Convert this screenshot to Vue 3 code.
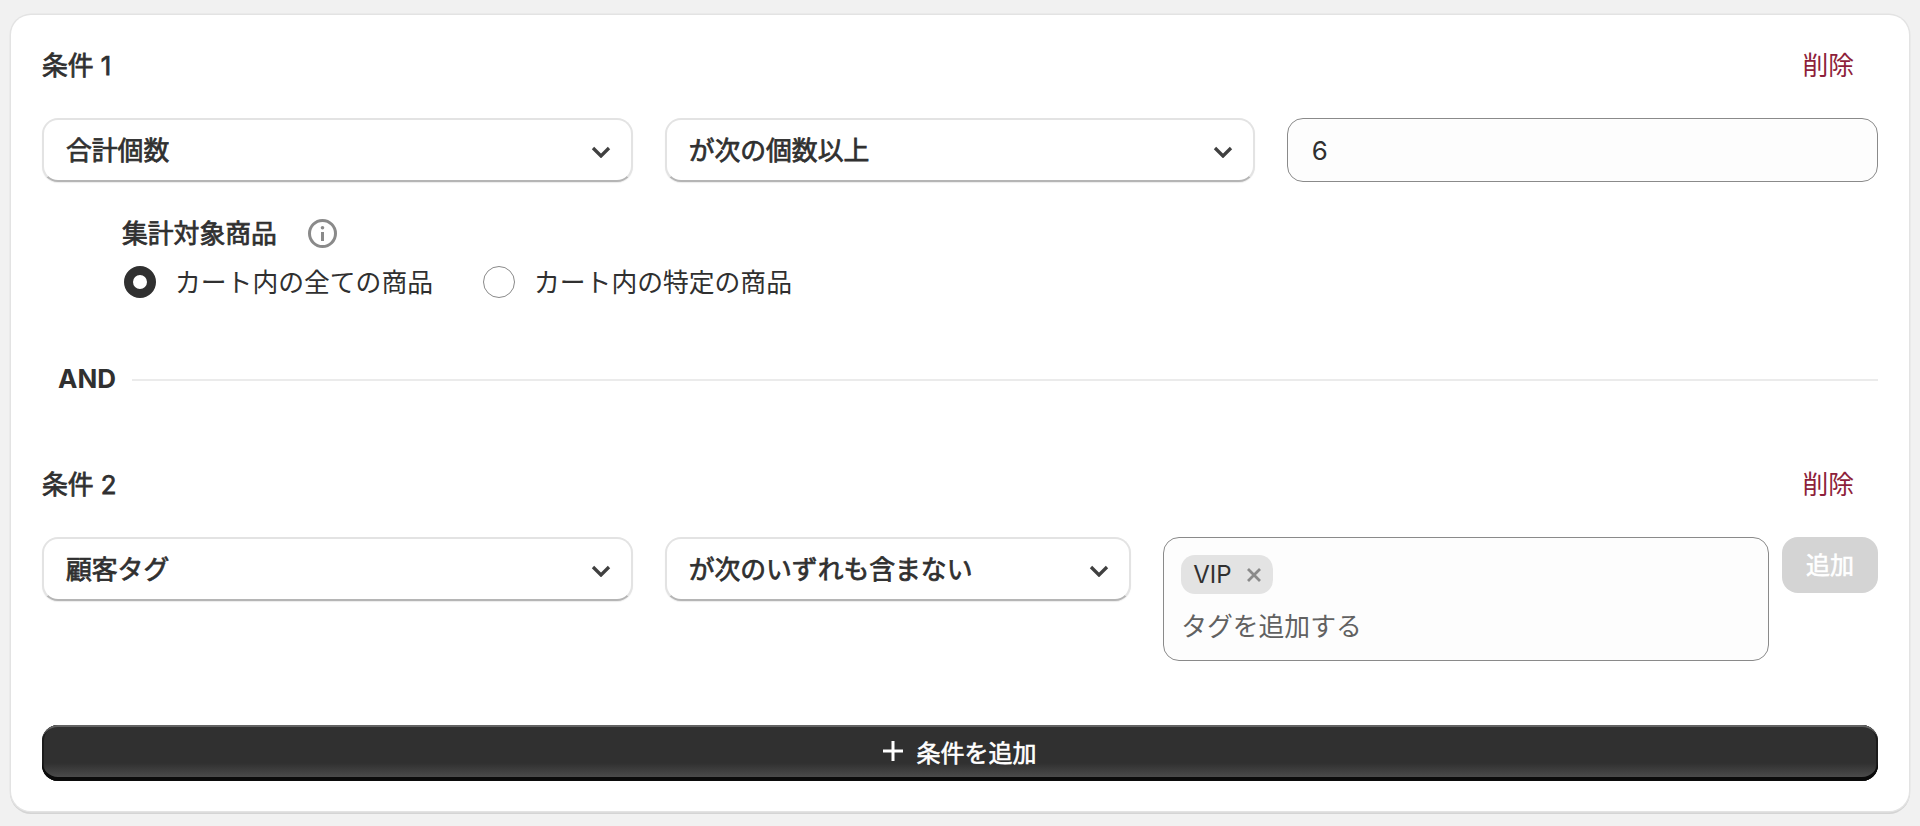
<script setup>
const allItems = 'カート内の全ての商品'
const specificItems = 'カート内の特定の商品'
</script>

<template>
  <div class="page">
    <section class="card">
      <header class="cond-head">
        <h2>条件 1</h2>
        <button class="del">削除</button>
      </header>
      <div class="row row-three">
        <button class="select">
          <span>合計個数</span>
          <svg class="chev" viewBox="0 0 20 12"><path d="M2 2l8 8 8-8" /></svg>
        </button>
        <button class="select">
          <span>が次の個数以上</span>
          <svg class="chev" viewBox="0 0 20 12"><path d="M2 2l8 8 8-8" /></svg>
        </button>
        <div class="field">6</div>
      </div>

      <div class="target">
        <div class="target-label">
          <span>集計対象商品</span>
          <svg class="info" viewBox="0 0 29 29">
            <circle cx="14.5" cy="14.5" r="13" />
            <circle class="dot" cx="14.5" cy="8.8" r="1.8" />
            <path d="M14.5 13v9" />
          </svg>
        </div>
        <div class="radios">
          <label class="radio"><i class="mark on"></i><span>{{ allItems }}</span></label>
          <label class="radio"><i class="mark"></i><span>{{ specificItems }}</span></label>
        </div>
      </div>

      <div class="and">
        <strong>AND</strong>
        <span class="rule"></span>
      </div>

      <header class="cond-head second">
        <h2>条件 2</h2>
        <button class="del">削除</button>
      </header>
      <div class="row row-tags">
        <button class="select">
          <span>顧客タグ</span>
          <svg class="chev" viewBox="0 0 20 12"><path d="M2 2l8 8 8-8" /></svg>
        </button>
        <button class="select">
          <span>が次のいずれも含まない</span>
          <svg class="chev" viewBox="0 0 20 12"><path d="M2 2l8 8 8-8" /></svg>
        </button>
        <div class="tag-wrap">
          <div class="tag-field">
            <span class="chip">VIP
              <svg viewBox="0 0 16 16"><path d="M2 2l12 12M14 2L2 14" /></svg>
            </span>
            <span class="placeholder">タグを追加する</span>
          </div>
          <button class="add-tag">追加</button>
        </div>
      </div>

      <button class="add-cond">
        <svg viewBox="0 0 22 22"><path d="M11 1v20M1 11h20" /></svg>
        <span>条件を追加</span>
      </button>
    </section>
  </div>
</template>

<style>
html, body { margin: 0; background: #f1f1f1; }
</style>

<style scoped>
.page {
  box-sizing: border-box;
  min-height: 826px;
  padding: 15px 11px;
  background: #f1f1f1;
  color: #303030;
  font-family: Inter, "Noto Sans CJK JP", sans-serif;
  font-size: 25.8px;
}
.card {
  background: #fff;
  border-radius: 20px;
  padding: 26px 31px 30px;
  box-shadow: 0 0 0 1.5px #e3e3e3, 0 2px 0 1px #d4d4d4;
}
button { font: inherit; color: inherit; cursor: pointer; }
.cond-head {
  height: 48px;
  display: flex;
  align-items: center;
  justify-content: space-between;
}
.cond-head.second { margin-top: 65px; }
h2 {
  margin: 0;
  padding-bottom: 4px;
  font-size: 25.8px;
  font-weight: 400;
  -webkit-text-stroke: 0.75px currentColor;
}
.del {
  border: 0;
  background: none;
  padding: 0 24px 3px;
  color: #8e1f3b;
}
.row { display: grid; gap: 32px; margin-top: 29px; align-items: start; }
.row-three { grid-template-columns: repeat(3, 1fr); }
.row-tags { grid-template-columns: 590.67px 466.5px 1fr; }
.select {
  box-sizing: border-box;
  height: 64px;
  padding: 0 20px 0 22px;
  display: flex;
  align-items: center;
  justify-content: space-between;
  background: #fff;
  border: 2px solid #e3e3e3;
  border-bottom: 2.5px solid #b5b5b5;
  border-radius: 16px;
  font-weight: 400;
  box-shadow: 0 1px 1px rgba(0, 0, 0, 0.08);
}
.select span { padding-bottom: 3px; -webkit-text-stroke: 0.75px currentColor; }
.chev { width: 20px; height: 12px; margin-top: 4px; fill: none; stroke: #404040; stroke-width: 3.3; }
.field {
  box-sizing: border-box;
  height: 64px;
  padding: 0 23.5px;
  display: flex;
  align-items: center;
  background: #fdfdfd;
  border: 1.5px solid #8a8a8a;
  border-radius: 16px;
}
.target { padding-left: 80px; margin-top: 36px; }
.target-label {
  height: 32px;
  display: flex;
  align-items: center;
  gap: 31px;
}
.target-label span { padding-bottom: 6px; -webkit-text-stroke: 0.75px currentColor; }
.info { width: 29px; height: 29px; margin-top: -1px; fill: none; stroke: #8a8a8a; stroke-width: 3; }
.info .dot { fill: #8a8a8a; stroke: none; }
.radios { display: flex; gap: 50px; margin-top: 16px; padding-left: 2px; }
.radio { display: flex; align-items: center; gap: 19px; height: 32px; cursor: pointer; }
.radio span { padding-bottom: 4px; }
.mark {
  box-sizing: border-box;
  width: 32px;
  height: 32px;
  border-radius: 50%;
  border: 1.5px solid #8a8a8a;
  background: #fff;
}
.mark.on { border: 9px solid #303030; }
.and { display: flex; align-items: center; gap: 16px; height: 32px; margin-top: 65px; padding-left: 16px; }
.and strong { font-weight: 700; font-size: 26px; padding-bottom: 1px; }
.rule { flex: 1; height: 2px; background: #ebebeb; margin-top: 2px; }
.tag-wrap { display: flex; gap: 13px; align-items: flex-start; }
.tag-field {
  box-sizing: border-box;
  flex: 1;
  height: 124px;
  padding: 17px 17px 0;
  background: #fdfdfd;
  border: 1.5px solid #8a8a8a;
  border-radius: 16px;
  display: flex;
  flex-direction: column;
  align-items: flex-start;
}
.chip {
  box-sizing: border-box;
  height: 39px;
  width: 92px;
  padding: 0 11px 0 12px;
  display: flex;
  align-items: center;
  justify-content: space-between;
  background: #e3e3e3;
  border-radius: 14px;
  font-size: 24px;
}
.chip svg { width: 16px; height: 16px; fill: none; stroke: #8a8a8a; stroke-width: 2.8; }
.placeholder { margin-top: 17px; color: #616161; line-height: 32px; }
.add-tag {
  width: 96px;
  height: 56px;
  border: 0;
  border-radius: 16px;
  background: #d4d4d4;
  color: #fff;
  font-size: 24px;
  padding: 0 0 4px;
  -webkit-text-stroke: 0.6px currentColor;
}
.add-cond {
  box-sizing: border-box;
  width: 100%;
  height: 56px;
  margin-top: 64px;
  border: 0;
  border-radius: 16px;
  display: flex;
  align-items: center;
  justify-content: center;
  gap: 13px;
  color: #fff;
  font-size: 24px;
  padding: 0 2px 4px 0;
  background: linear-gradient(#303030 0, #303030 68%, #4a4a4a 92%, #4a4a4a 100%);
  box-shadow:
    inset 0 3px 0 -1px #636363,
    inset 0 -4px 0 #0b0b0b,
    inset 2px 0 0 #1c1c1c,
    inset -2px 0 0 #1c1c1c;
}
.add-cond span { -webkit-text-stroke: 0.6px currentColor; }
.add-cond svg { width: 22px; height: 22px; fill: none; stroke: #fff; stroke-width: 3; }
</style>
